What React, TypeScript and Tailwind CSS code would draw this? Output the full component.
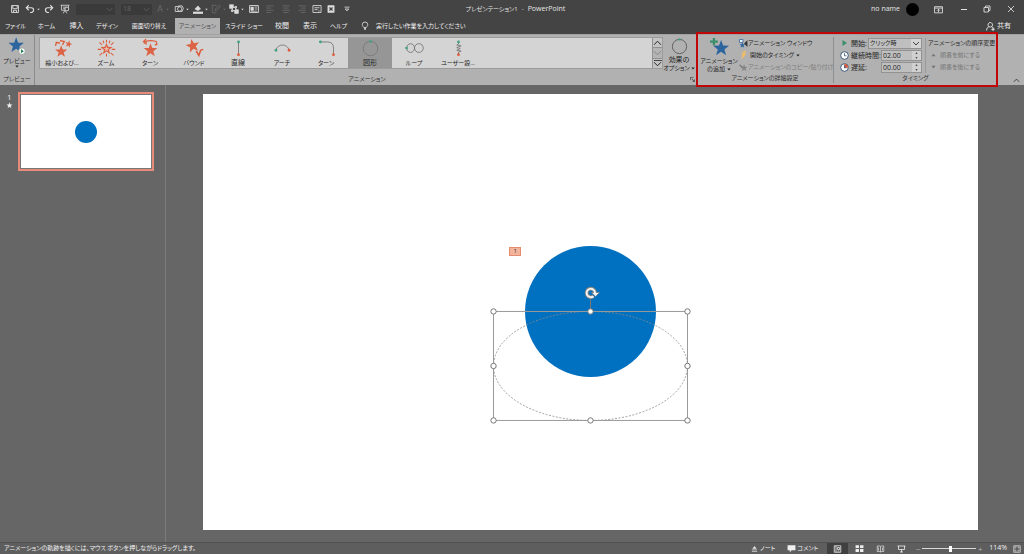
import type { ReactNode } from 'react';

const STAR = 'M0,-6 L1.5,-2 L5.8,-1.9 L2.4,0.8 L3.6,5 L0,2.5 L-3.6,5 L-2.4,0.8 L-5.8,-1.9 L-1.5,-2 Z';

function Star({ x, y, s = 1, r = 0, fill = '#dc6345' }: { x: number; y: number; s?: number; r?: number; fill?: string }) {
  return <path d={STAR} fill={fill} stroke="none" transform={`translate(${x} ${y}) rotate(${r}) scale(${s})`} />;
}

function Icon({ children, box = '0 0 16 16', className = 'w-3 h-3' }: { children: ReactNode; box?: string; className?: string }) {
  return (
    <svg viewBox={box} className={`shrink-0 ${className}`} fill="none" stroke="currentColor" aria-hidden="true">
      {children}
    </svg>
  );
}

function Caret({ className = 'w-[4px] h-[3px]' }: { className?: string }) {
  return (
    <svg viewBox="0 0 4 3" className={`shrink-0 ${className}`} aria-hidden="true">
      <path d="M0.3 0.5h3.4L2 2.6z" fill="currentColor" />
    </svg>
  );
}

function Chevron({ up = false, className = 'w-[9px] h-[6px]' }: { up?: boolean; className?: string }) {
  return (
    <svg viewBox="0 0 9 6" className={`shrink-0 ${className}`} fill="none" stroke="currentColor" aria-hidden="true">
      <path d={up ? 'M1 4.8 4.5 1.2 8 4.8' : 'M1 1.2 4.5 4.8 8 1.2'} />
    </svg>
  );
}

function Tool({ label, width = 'w-4', caret = false, dim = false, children }: { label: string; width?: string; caret?: boolean; dim?: boolean; children: ReactNode }) {
  return (
    <button aria-label={label} className={`flex h-full items-center justify-center gap-[2px] ${width} ${dim ? 'text-[#6b6b6b]' : 'text-[#dcdcdc]'}`}>
      <Icon className="w-[10px] h-[10px]">{children}</Icon>
      {caret && <Caret className="w-[3px] h-[3px]" />}
    </button>
  );
}

function TitleBar() {
  return (
    <header className="flex h-[18px] shrink-0 items-center justify-between bg-[#444444] text-[#e4e4e4]">
      <div className="flex h-full flex-1 items-center pl-[7px]">
        <Tool label="上書き保存">
          <path d="M2.5 2.5h11v11h-11zM4.5 3v4.5h7V3M5.5 13.5V10h5v3.5" strokeWidth="1.5" />
        </Tool>
        <Tool label="元に戻す" width="w-[18px]" caret>
          <path d="M6 2 2 6l4 4M2 6h8c5 0 5 7 0 7.500H8" strokeWidth="1.800" />
        </Tool>
        <Tool label="やり直し">
          <path d="M10 2l4 4-4 4M14 6H6C1 6 1 13 6 13.500h2" strokeWidth="1.800" />
        </Tool>
        <Tool label="先頭から開始">
          <path d="M1 2h14M2.500 2v8h11V2M5 15l3-5 3 5M5 5h6M5 7.500h3" strokeWidth="1.300" />
          <circle cx="11" cy="8" r="3" fill="#444444" strokeWidth="1.300" />
        </Tool>
        <label className="relative ml-[3px] flex h-[11px] w-[39px] items-center bg-[#3a3a3a] text-[#666666]">
          <select aria-label="フォント" className="h-full w-full appearance-none" disabled />
          <Chevron className="absolute right-[2px] w-[7px] h-[5px]" />
        </label>
        <label className="relative ml-[6px] mr-[2px] flex h-[11px] w-[31px] items-center bg-[#3a3a3a] text-[#666666]">
          <select aria-label="フォント サイズ" className="h-full w-full appearance-none pl-[2px] text-[7px] leading-[10px]" disabled>
            <option>18</option>
          </select>
          <Chevron className="absolute right-[2px] w-[7px] h-[5px]" />
        </label>
        <button aria-label="フォントの色" className="flex w-[18px] items-center justify-center gap-[3px] text-[9px] text-[#6b6b6b]">
          A
          <Caret className="w-[3px] h-[3px]" />
        </button>
        <Tool label="図形" width="w-[19px]" caret>
          <path d="M2 4h7v8H2zM7 3h6l2 4-2 5H8" strokeWidth="1.300" />
          <circle cx="9" cy="8" r="3.500" strokeWidth="1.300" fill="#444444" />
        </Tool>
        <Tool label="図形の塗りつぶし" width="w-[18px]" caret>
          <path d="M3 8l5-5 4 5-4 2.500z" fill="currentColor" />
          <path d="M0 14h16" strokeWidth="3.500" />
        </Tool>
        <Tool label="図形の枠線" width="w-[18px]" caret dim>
          <path d="M9 2H2v12h7M6 11l1-3 6-6 2 2-6 6z" strokeWidth="1.300" />
        </Tool>
        <Tool label="配置" width="w-[19px]" caret>
          <path d="M1 1h6v6H1zM9 9h6v6H9z" fill="currentColor" />
          <path d="M9 4h3v3M4 9v3h3" strokeWidth="1.500" />
          <path d="M5.500 5.500h5v5h-5z" fill="#444444" strokeWidth="1.500" />
        </Tool>
        <Tool label="レイアウト">
          <path d="M1 2.500h14v11H1z" strokeWidth="1.500" />
          <path d="M3 5h4v5H3z" fill="currentColor" />
          <path d="M9 5h4M9 8h4M3 11.500h10" strokeWidth="1.200" />
        </Tool>
        <Tool label="左揃え" dim>
          <path d="M2 3h12M2 6.500h8M2 10h12M2 13.500h8" strokeWidth="1.300" />
        </Tool>
        <Tool label="中央揃え" dim>
          <path d="M2 3h12M4 6.500h8M2 10h12M4 13.500h8" strokeWidth="1.300" />
        </Tool>
        <Tool label="右揃え" dim>
          <path d="M2 3h12M6 6.500h8M2 10h12M6 13.500h8" strokeWidth="1.300" />
        </Tool>
        <Tool label="セクション" width="w-[13px]">
          <path d="M1.500 2.500h13v11h-13zM4 6h8M4 9h5M10 11h2" strokeWidth="1.400" />
        </Tool>
        <Tool label="閉じる">
          <path d="M3 2.500h10v11H3z" fill="currentColor" />
          <path d="M5.500 5.500l5 5M10.500 5.500l-5 5" stroke="#444444" strokeWidth="2" />
        </Tool>
        <Tool label="ツール バーのカスタマイズ">
          <path d="M4 5h8M5 8h6l-3 3z" strokeWidth="1.300" />
        </Tool>
      </div>
      <h1 className="flex items-center gap-[4px] text-[6px]">
        プレゼンテーション1 <span>-</span> <span className="text-[7px]">PowerPoint</span>
      </h1>
      <div className="flex h-full flex-1 items-center justify-end">
        <span className="text-[7px]">no name</span>
        <span className="ml-[6px] h-[13px] w-[13px] rounded-full bg-black" />
        <button aria-label="リボンの表示オプション" className="ml-[6px] flex w-[26px] justify-center">
          <Icon className="w-[9px] h-[9px]">
            <path d="M1 3h14v11H1zM1 5.500h14M8 13V7.500M5.500 10 8 7.500l2.500 2.500" strokeWidth="1.500" />
          </Icon>
        </button>
        <button aria-label="最小化" className="flex w-[25px] justify-center">
          <span className="h-px w-[6px] bg-[#e4e4e4]" />
        </button>
        <button aria-label="元に戻す (縮小)" className="flex w-[22px] justify-center">
          <Icon className="w-[8px] h-[8px]">
            <path d="M2 5h9v9H2zM5 5V2h9v9h-3" strokeWidth="1.700" />
          </Icon>
        </button>
        <button aria-label="閉じる" className="flex w-[26px] justify-center">
          <Icon className="w-[8px] h-[8px]">
            <path d="M2 2l12 12M14 2 2 14" strokeWidth="1.700" />
          </Icon>
        </button>
      </div>
    </header>
  );
}

const TABS: { label: string; width: string }[] = [
  { label: 'ファイル', width: 'w-[31px]' },
  { label: 'ホーム', width: 'w-[31px]' },
  { label: '挿入', width: 'w-[29px] text-[7px]' },
  { label: 'デザイン', width: 'w-[32px]' },
  { label: '画面切り替え', width: 'w-[52px]' },
  { label: 'アニメーション', width: 'w-[45px]' },
  { label: 'スライド ショー', width: 'w-[48px]' },
  { label: '校閲', width: 'w-[28px] text-[7px]' },
  { label: '表示', width: 'w-[28px] text-[7px]' },
  { label: 'ヘルプ', width: 'w-[29px]' },
];

function TabBar() {
  return (
    <nav className="flex h-4 shrink-0 items-stretch bg-[#444444] text-[6px] text-[#f0f0f0]">
      {TABS.map((tab, i) => (
        <button key={tab.label} className={`flex items-center justify-center ${tab.width} ${i === 5 ? 'bg-[#b1b1b1] text-[#4a4a4a]' : ''}`}>
          {tab.label}
        </button>
      ))}
      <button className="ml-[8px] flex items-center gap-[7px]">
        <Icon className="w-[8px] h-[10px]">
          <path d="M5.500 11C5 9 2.500 8.500 2.500 5.500a5.500 5.500 0 0 1 11 0C13.500 8.500 11 9 10.500 11zM6 13h4M6.500 15h3" strokeWidth="1.500" />
        </Icon>
        <span>実行したい作業を入力してください</span>
      </button>
      <button className="ml-auto mr-[13px] flex items-center gap-[2px] text-[7px]">
        <Icon className="w-[9px] h-[9px]">
          <path d="M7.500 1a4 4 0 1 0 .1 0M1 15c0-4 2-6 4-6.500M10 8.500c2 .5 3 2 3 3M12.500 10v6M9.500 13h6" strokeWidth="1.600" />
        </Icon>
        共有
      </button>
    </nav>
  );
}

const GREEN = '#43a086';
const RED = '#dc5a38';

const EFFECTS: { label: string; kanji?: boolean; art: ReactNode }[] = [
  {
    label: '縮小および…',
    art: (
      <>
        <Star x={10.5} y={15.5} s={1.2} />
        <Star x={19} y={7} s={0.7} r={15} />
        <path d="M4 9l1-4 4 1M9 3l5 1-2 4" stroke={RED} strokeWidth="1.500" />
      </>
    ),
  },
  {
    label: 'ズーム',
    art: (
      <>
        <Star x={12} y={12.5} s={1.200} />
        <Star x={12} y={12.5} s={0.55} fill="#eeb9a8" />
        <path d="M4 5l3 3M20 5l-3 3M12 2v3M2 13h4M18 13h4M4 20l3-3M20 20l-3-3M8 3l1 3M16 3l-1 3M12 18v3" stroke={RED} strokeWidth="1.200" />
      </>
    ),
  },
  {
    label: 'ターン',
    art: (
      <>
        <Star x={12} y={14} s={1.350} />
        <path d="M8 7C2 6 4 3 12 3s9 3 5 5M17 8l3-.5M7 1 4 4l4 1" stroke={RED} strokeWidth="1.200" />
      </>
    ),
  },
  {
    label: 'バウンド',
    art: (
      <>
        <Star x={10} y={9} s={1.350} r={-12} />
        <path d="M14 15l3 5 2-6 3-1" stroke={RED} strokeWidth="1.800" />
      </>
    ),
  },
  {
    label: '直線',
    kanji: true,
    art: (
      <>
        <path d="M12 5v14" stroke="#777" />
        <circle cx="12" cy="4.500" r="1.600" fill={GREEN} stroke="none" />
        <circle cx="12" cy="19" r="1.600" fill={RED} stroke="none" />
      </>
    ),
  },
  {
    label: 'アーチ',
    art: (
      <>
        <path d="M4.500 14C6 6 18 6 19.500 14" stroke="#777" />
        <circle cx="4.500" cy="14" r="1.600" fill={GREEN} stroke="none" />
        <circle cx="19.500" cy="14" r="1.600" fill={RED} stroke="none" />
      </>
    ),
  },
  {
    label: 'ターン',
    art: (
      <>
        <path d="M5 4.500h8q7 0 7 7V19" stroke="#777" />
        <circle cx="5" cy="4.500" r="1.600" fill={GREEN} stroke="none" />
        <circle cx="20" cy="19" r="1.600" fill={RED} stroke="none" />
      </>
    ),
  },
  {
    label: '図形',
    kanji: true,
    art: (
      <>
        <circle cx="12" cy="12" r="8.300" stroke="#777" />
        <circle cx="12" cy="4" r="1.500" fill={GREEN} stroke="none" />
      </>
    ),
  },
  {
    label: 'ループ',
    art: (
      <>
        <ellipse cx="7.500" cy="11.500" rx="4.500" ry="5" stroke="#777" />
        <ellipse cx="17" cy="11.500" rx="5" ry="5" stroke="#777" />
        <circle cx="3" cy="11.500" r="1.600" fill={GREEN} stroke="none" />
      </>
    ),
  },
  {
    label: 'ユーザー設…',
    art: (
      <>
        <path d="M12 4v3l-2 1 5 1-5 2 4 1-4 2 5 1-3 1v3" stroke="#777" />
        <circle cx="12" cy="4.500" r="1.600" fill={GREEN} stroke="none" />
        <circle cx="12" cy="19" r="1.600" fill={RED} stroke="none" />
      </>
    ),
  },
];

function GroupLabel({ children }: { children: ReactNode }) {
  return <div className="flex h-[12px] items-center justify-center text-[6px] text-[#333333]">{children}</div>;
}

function ClockIcon({ late = false }: { late?: boolean }) {
  return (
    <Icon className="w-[9px] h-[9px]">
      <circle cx="8" cy="8" r="6.800" fill="#fff" stroke="#39587a" strokeWidth="1.700" />
      {late && <path d="M8 8V2a6 6 0 0 1 6 6z" fill={RED} stroke={RED} />}
      <path d="M8 4v4.500h3.500" stroke="#39587a" strokeWidth="1.500" />
    </Icon>
  );
}

function TimeField({ id, label, value, late }: { id: string; label: string; value: string; late?: boolean }) {
  return (
    <div className="flex h-3 items-center">
      <ClockIcon late={late} />
      <label htmlFor={id} className="ml-[2px] w-[30px] text-[7px] leading-[9px]">
        {label}
      </label>
      <div className="flex h-[11px] w-[41px] border border-[#929292] bg-[#bfbfbf]">
        <input id={id} defaultValue={value} className="w-[30px] min-w-0 pl-px text-[7px] leading-[9px]" />
        <span className="flex flex-1 flex-col items-center justify-center gap-[3px] bg-[#d0d0d0]">
          <button aria-label={`${label} 増やす`}>
            <Caret className="block w-[3px] h-[2px] rotate-180" />
          </button>
          <button aria-label={`${label} 減らす`}>
            <Caret className="block w-[3px] h-[2px]" />
          </button>
        </span>
      </div>
    </div>
  );
}

function Ribbon() {
  return (
    <section className="flex h-[51px] shrink-0 border-t border-[#a2a2a2] bg-[#b1b1b1] text-[#262626]">
      <div className="flex w-[35px] flex-col border-r border-[#8b8b8b]">
        <button className="flex flex-1 flex-col items-center pt-[2px] text-[6px] leading-[8px]">
          <Icon box="0 0 24 24" className="w-[20px] h-[20px]">
            <Star x={11} y={10} s={1.600} fill="#2d659f" />
            <circle cx="18" cy="17" r="4" fill="#fff" stroke="#8a9c94" />
            <path d="M16.800 14.500v5l3.500-2.500z" fill="#2f8460" stroke="none" />
          </Icon>
          プレビュー
          <Caret />
        </button>
        <GroupLabel>プレビュー</GroupLabel>
      </div>

      <div className="flex flex-1 flex-col pl-[4px] pt-[2px]">
        <div className="flex flex-1">
          <div className="flex h-[32px] flex-1 border border-[#9b9b9b] bg-[#d4d4d4]">
            <div className="flex flex-1">
              {EFFECTS.map((effect, i) => (
                <button
                  key={i}
                  className={`flex w-[44px] flex-col items-center leading-[8px] ${effect.kanji ? 'text-[7px]' : 'text-[6px]'} ${i === 7 ? 'bg-[#969696]' : ''}`}
                >
                  <Icon box="0 0 24 24" className="w-[21px] h-[21px]">
                    {effect.art}
                  </Icon>
                  {effect.label}
                </button>
              ))}
            </div>
            <div className="flex w-[10px] flex-col divide-y divide-[#909090] border-l border-[#909090] bg-[#c4c4c4]">
              <button aria-label="前の行" className="flex flex-1 items-center justify-center"><Chevron up /></button>
              <button aria-label="次の行" className="flex flex-1 items-center justify-center bg-[#b4b4b4] text-[#858585]"><Chevron /></button>
              <button aria-label="その他" className="flex flex-1 flex-col items-center justify-center">
                <span className="h-px w-[8px] bg-[#444444]" />
                <Chevron />
              </button>
            </div>
          </div>
          <button className="flex w-[32px] flex-col items-center text-[6px] leading-[8px]">
            <Icon box="0 0 24 24" className="w-[19px] h-[19px]">
              <circle cx="12" cy="12" r="9" stroke="#4c4c4c" />
              <circle cx="12" cy="3" r="1.500" fill={GREEN} stroke="none" />
            </Icon>
            <span className="text-[7px]">効果の</span>
            <span className="flex items-center gap-px whitespace-nowrap">
              オプション
              <Caret />
            </span>
          </button>
        </div>
        <div className="relative">
          <GroupLabel>アニメーション</GroupLabel>
          <button aria-label="アニメーションの詳細" className="absolute right-0 top-[4px]">
            <Icon className="block w-[5px] h-[5px]">
              <path d="M1 10V1h10M6 6l8 8M14 8v6H8" strokeWidth="2" />
            </Icon>
          </button>
        </div>
      </div>

      <div className="relative ml-[2px] flex w-[300px]">
        <div className="pointer-events-none absolute -inset-x-px -top-[3px] -bottom-[2px] z-10 border-2 border-[#c00606]" />
        <div className="my-[2px] flex w-[137px] flex-col border-r border-[#8f8f8f]">
          <div className="flex flex-1">
            <button className="ml-[2px] flex w-[40px] shrink-0 flex-col items-center pt-px text-[6px] leading-[8px]">
              <Icon box="0 0 24 24" className="w-[19px] h-[19px]">
                <Star x={14} y={13} s={1.750} fill="#2d659f" />
                <path d="M5 0v9M0 4.500h10" stroke="#3d8f6c" strokeWidth="3" />
              </Icon>
              <span>アニメーション</span>
              <span className="flex items-center gap-[2px]">
                の追加
                <Caret />
              </span>
            </button>
            <div className="flex flex-1 flex-col text-[6px] leading-[8px] whitespace-nowrap">
              <button className="flex h-3 items-center">
                <Icon className="w-[9px] h-[9px]">
                  <path d="M1 1h6v5H1z" fill="#fff" stroke="#2d659f" strokeWidth="1.500" />
                  <Star x={6} y={11} s={0.9} fill="#2d659f" />
                  <path d="M15 2v12L9 8z" fill="#333" stroke="none" />
                </Icon>
                アニメーション ウィンドウ
              </button>
              <button className="flex h-3 items-center gap-[2px]">
                <Icon className="w-[9px] h-[9px]">
                  <path d="M8 0h5l-3 5h3L4 16l2-8H4z" fill="#efbd68" stroke="none" />
                </Icon>
                開始のタイミング
                <Caret />
              </button>
              <button className="flex h-3 items-center text-[#7c7c7c]">
                <Icon className="w-[9px] h-[9px]">
                  <Star x={9} y={9} s={1.100} fill="#858585" />
                  <path d="M1 3l5 5" strokeWidth="2.500" />
                </Icon>
                アニメーションのコピー/貼り付け
              </button>
            </div>
          </div>
          <GroupLabel>アニメーションの詳細設定</GroupLabel>
        </div>

        <div className="my-[2px] flex flex-1 flex-col">
          <div className="flex flex-1">
            <div className="ml-[6px] w-[83px]">
              <div className="flex h-3 items-center">
                <Icon className="w-[9px] h-[8px]">
                  <path d="M4 2v12l9-6z" fill="#3d8f6c" stroke="none" />
                </Icon>
                <label htmlFor="start" className="ml-[2px] w-[17px] text-[7px] leading-[9px]">
                  開始:
                </label>
                <span className="relative flex h-[11px] w-[54px] items-center border border-[#929292] bg-[#bfbfbf]">
                  <select id="start" className="h-full w-full appearance-none pl-px text-[6px] leading-[9px]">
                    <option>クリック時</option>
                  </select>
                  <span className="pointer-events-none absolute inset-y-0 right-0 flex w-[10px] items-center justify-center bg-[#d4d4d4]">
                    <Chevron className="w-[8px] h-[5px]" />
                  </span>
                </span>
              </div>
              <TimeField id="duration" label="継続時間:" value="02.00" />
              <TimeField id="delay" label="遅延:" value="00.00" late />
            </div>
            <div className="my-px ml-[2px] flex-1 border-l border-[#9a9a9a] pl-[2px] text-[6px] whitespace-nowrap">
              <div className="flex h-[11px] items-center">アニメーションの順序変更</div>
              <button className="flex h-3 items-center gap-[4px] pl-[3px] text-[#757575]">
                <Caret className="w-[5px] h-[4px] rotate-180" />
                順番を前にする
              </button>
              <button className="flex h-3 items-center gap-[4px] pl-[3px] text-[#757575]">
                <Caret className="w-[5px] h-[4px]" />
                順番を後にする
              </button>
            </div>
          </div>
          <GroupLabel>タイミング</GroupLabel>
        </div>
      </div>

      <div className="flex w-[27px] items-end justify-end pr-[4px] pb-[2px]">
        <button aria-label="リボンを折りたたむ">
          <Chevron up className="w-[7px] h-[5px]" />
        </button>
      </div>
    </section>
  );
}

const HANDLES: [number, number][] = [
  [290.5, 217.5], [387.5, 217.5], [484.5, 217.5],
  [290.5, 272], [484.5, 272],
  [290.5, 326.5], [387.5, 326.5], [484.5, 326.5],
];

function Workspace() {
  return (
    <main className="flex min-h-0 flex-1 bg-[#666666]">
      <aside className="flex w-[166px] shrink-0 items-start border-r border-[#7c7c7c] pt-[7px] pl-[6px] text-[#f0f0f0]">
        <div className="flex w-3 flex-col items-start text-[8px] leading-[10px]">
          <span className="pl-px">1</span>
          <Icon className="w-[7px] h-[7px]">
            <Star x={8} y={8} s={1.200} fill="#f0f0f0" />
          </Icon>
        </div>
        <button aria-label="スライド 1" className="flex h-[79px] w-[136px] border-2 border-[#e58b78] bg-[#777777] p-px">
          <span className="flex flex-1 items-center justify-center self-stretch bg-white">
            <span className="h-[22px] w-[22px] rounded-full bg-[#0070c0]" />
          </span>
        </button>
      </aside>
      <div className="min-w-0 flex-1 pt-[9px] pr-[46px] pl-[37px]">
        <div className="relative aspect-video w-full bg-white">
          <svg viewBox="0 0 775 436" className="h-full w-full" fill="none">
            <circle cx="387.500" cy="217.500" r="65.500" fill="#0070c0" />
            <ellipse cx="387.500" cy="272" rx="97" ry="54.500" stroke="#8a8a8a" strokeWidth="0.800" strokeDasharray="2 1.500" />
            <rect x="290.500" y="217.500" width="194" height="109" stroke="#9a9a9a" />
            <path d="M387.500 204v13" stroke="#777" />
            {HANDLES.map(([x, y]) => (
              <circle key={`${x}-${y}`} cx={x} cy={y} r="2.700" fill="#fff" stroke="#757575" />
            ))}
            <path d="M390.500 202.200A4.200 4.200 0 1 1 392 198" stroke="#808080" strokeWidth="4" />
            <path d="M388.500 198.500h8l-4 4z" fill="#f4f4f4" stroke="#808080" strokeWidth="0.800" />
            <path d="M390.500 202.200A4.200 4.200 0 1 1 392 199" stroke="#f4f4f4" strokeWidth="2" />
          </svg>
          <span className="absolute top-[35%] left-[39.500%] flex h-[9px] w-[12px] items-center justify-center border border-[#e58b70] bg-[#f4b49c] text-[6px] leading-none text-[#333333]">1</span>
        </div>
      </div>
    </main>
  );
}

function StatusBar() {
  return (
    <footer className="flex h-3 shrink-0 items-center border-t border-[#515151] bg-[#5e5e5e] pl-[4px] text-[6px] text-[#f0f0f0]">
      <span>アニメーションの軌跡を描くには、マウス ボタンを押しながらドラッグします。</span>
      <button className="ml-auto flex items-center gap-[2px]">
        <Icon className="w-[7px] h-[8px]">
          <path d="M2 10h12M2 13.500h12" strokeWidth="1.500" />
          <path d="M8 2l4 5H4z" fill="currentColor" />
        </Icon>
        ノート
      </button>
      <button className="ml-[12px] flex items-center gap-px">
        <Icon className="w-[9px] h-[9px]">
          <path d="M1 2h14v9H8l-3 4v-4H1z" fill="currentColor" stroke="none" />
        </Icon>
        コメント
      </button>
      <button aria-label="標準" className="ml-[9px] flex h-full w-[21px] items-center justify-center bg-[#404040]">
        <Icon className="w-[9px] h-[8px]">
          <path d="M1.500 1.500h13v13h-13zM5 2v12M8 5h4v4H8zM8 12h4" strokeWidth="1.600" />
        </Icon>
      </button>
      <button aria-label="スライド一覧" className="flex w-[22px] justify-center">
        <Icon className="w-[9px] h-[9px]">
          <path d="M1 2h6v5H1zM9 2h6v5H9zM1 9h6v5H1zM9 9h6v5H9z" fill="currentColor" stroke="none" />
        </Icon>
      </button>
      <button aria-label="閲覧表示" className="flex w-[21px] justify-center">
        <Icon className="w-[9px] h-[8px]">
          <path d="M8 3v11M1.500 2Q6 1 8 3q2-2 6.500-1v11Q10 12 8 14q-2-2-6.500-1zM4 5v6M12 5v6" strokeWidth="1.300" />
        </Icon>
      </button>
      <button aria-label="スライド ショー" className="flex w-[21px] justify-center">
        <Icon className="w-[9px] h-[8px]">
          <path d="M0 2h16M2 2v7h12V2M8 9v5M5 14h6" strokeWidth="1.600" />
        </Icon>
      </button>
      <button aria-label="縮小" className="ml-[3px] w-[6px] text-[8px] leading-[8px] text-[#b4b4b4]">−</button>
      <input
        aria-label="ズーム"
        type="range"
        min="10"
        max="220"
        defaultValue="120"
        className="mx-px h-[8px] w-[54px] appearance-none bg-[linear-gradient(#d8d8d8,#d8d8d8)] bg-[length:100%_1px] bg-center bg-no-repeat [&::-webkit-slider-thumb]:h-[6px] [&::-webkit-slider-thumb]:w-[3px] [&::-webkit-slider-thumb]:appearance-none [&::-webkit-slider-thumb]:bg-white"
      />
      <button aria-label="拡大" className="w-[6px] text-[8px] leading-[8px] text-[#b4b4b4]">+</button>
      <span className="ml-[6px] text-[7px]">114%</span>
      <button aria-label="ウィンドウに合わせる" className="mr-[3px] ml-[6px]">
        <Icon className="block w-[8px] h-[8px]">
          <path d="M1.500 1.500h13v13h-13zM4 7V4h3M9 4h3v3M12 9v3H9M7 12H4V9" strokeWidth="1.300" />
        </Icon>
      </button>
    </footer>
  );
}

export default function App() {
  return (
    <div lang="ja" className="flex h-screen flex-col overflow-hidden font-['Open_Sans','Noto_Sans_CJK_JP',sans-serif] whitespace-nowrap [font-feature-settings:'palt']">
      <TitleBar />
      <TabBar />
      <Ribbon />
      <Workspace />
      <StatusBar />
    </div>
  );
}
